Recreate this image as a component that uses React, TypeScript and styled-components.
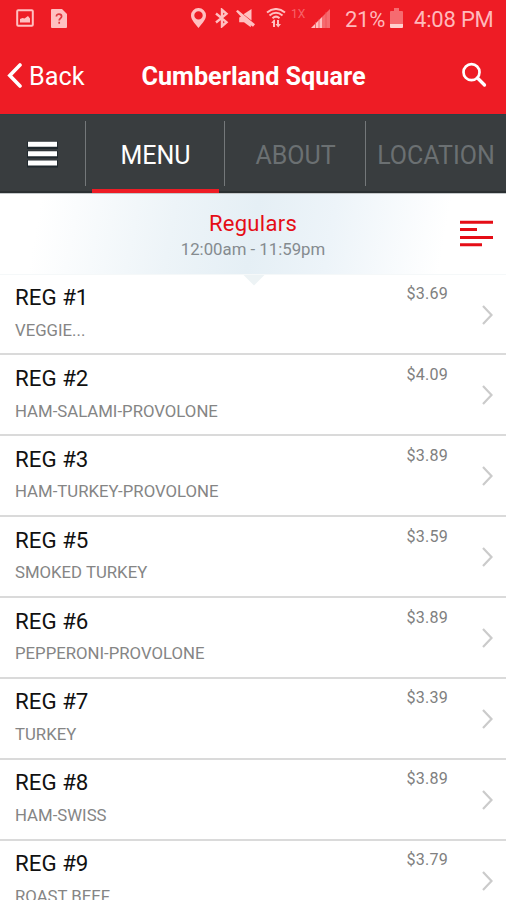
import React from "react";
import styled, { createGlobalStyle, css } from "styled-components";

const GlobalStyle = createGlobalStyle`
  * { box-sizing: border-box; }
  body { margin: 0; background: #fff; overflow: hidden; }
`;

const Screen = styled.main`
  width: 506px;
  height: 900px;
  overflow: hidden;
  display: flex;
  flex-direction: column;
  background: #fff;
  font-family: Roboto, sans-serif;
  white-space: nowrap;
`;

const StatusBar = styled.div`
  flex: none;
  height: 38px;
  display: flex;
  align-items: center;
  padding: 0 12px 0 16px;
  background: #ee1c25;
  color: #ffb9bb;
  font-size: 22px;
  line-height: 40px;
`;

const StatusIcon = styled.svg<{ $gap?: number }>`
  flex: none;
  display: block;
  margin: -2px ${(p) => p.$gap ?? 0}px 0 0;
`;

const Spacer = styled.div`
  flex: 1;
`;

const Network = styled.span`
  width: 20px;
  height: 29px;
  color: #f7636a;
  font-size: 12px;
  line-height: 18px;
`;

const Percent = styled.span`
  width: 45px;
  padding-top: 2px;
  letter-spacing: -0.3px;
`;

const Clock = styled.span`
  width: 80px;
  padding-top: 2px;
  letter-spacing: -0.2px;
`;

const TitleBar = styled.header`
  flex: none;
  height: 76px;
  display: grid;
  grid-template-columns: 120px 1fr 120px;
  align-items: center;
  background: #ee1c25;
  color: #fff;
`;

const BackButton = styled.button`
  display: flex;
  align-items: center;
  gap: 7px;
  height: 76px;
  padding: 0 0 0 7px;
  border: 0;
  background: none;
  color: inherit;
  font: 400 25.3px/30px Roboto, sans-serif;
`;

const BackLabel = styled.span`
  padding-top: 2px;
`;

const Title = styled.h1`
  margin: 1px 0 0 1px;
  text-align: center;
  font-size: 25.2px;
  line-height: 30px;
  font-weight: 700;
`;

const SearchButton = styled.button`
  justify-self: end;
  display: block;
  margin: 0 19px 0 0;
  padding: 0;
  border: 0;
  background: none;
  color: inherit;
`;

const TabBar = styled.nav`
  flex: none;
  height: 79px;
  display: grid;
  grid-template-columns: 86px 139px 141px 140px;
  border-top: 1px solid #2c3f45;
  border-bottom: 2px solid #2b3032;
  background: #393d3f;
`;

const Tab = styled.button<{ $active?: boolean }>`
  display: flex;
  flex-direction: column;
  align-items: center;
  padding: 26px 0 0;
  border: 0;
  background:
    linear-gradient(#74787a, #74787a) right 0 top 6px / 1px 65px no-repeat;
  color: #6b7072;
  font: 400 25px/30px Roboto, sans-serif;
  letter-spacing: 0;
  &:last-child { background: none; }
  ${(p) =>
    p.$active &&
    css`
      color: #fff;
      &::after {
        content: "";
        width: 127px;
        height: 4px;
        margin: 18px 0 -4px;
        flex: none;
        background: #ee1c25;
      }
    `}
`;

const MenuIcon = styled.svg`
  margin-left: -2px;
`;

const Category = styled.section`
  flex: none;
  height: 81.6px;
  display: grid;
  grid-template-columns: 80px 1fr 80px;
  background: linear-gradient(100deg, #fff 8%, #edf4f8 34%, #e5eff5 50%, #edf4f9 65%, #fff 87%);
  border-top: 1px solid #c5c9cb;
  border-bottom: 1px solid #f5f8f9;
`;

const CategoryText = styled.div`
  grid-column: 2;
  display: flex;
  flex-direction: column;
  align-items: center;
  padding-top: 16px;
`;

const CategoryName = styled.h2`
  margin: 0;
  color: #e50d16;
  font-size: 22px;
  line-height: 28px;
  font-weight: 400;
  letter-spacing: 0.3px;
`;

const Hours = styled.span`
  color: #858b8f;
  font-size: 16.8px;
  line-height: 23px;
`;

const SortButton = styled.button`
  justify-self: end;
  align-self: start;
  margin: 26px 13px 0 0;
  padding: 0;
  border: 0;
  background: none;
`;

const List = styled.ul`
  position: relative;
  margin: 0;
  padding: 0;
  list-style: none;
  &::before {
    content: "";
    position: absolute;
    top: 0;
    left: 243px;
    width: 22px;
    height: 11px;
    background: #edf3f5;
    clip-path: polygon(0 0, 100% 0, 50% 100%);
  }
`;

const Item = styled.li`
  height: 80.9px;
  display: grid;
  grid-template-columns: 1fr 58px 58px;
  padding-left: 15px;
  border-bottom: 2px solid #dadada;
`;

const ItemText = styled.div`
  padding-top: 8.4px;
`;

const ItemName = styled.h3`
  margin: 0;
  color: #111;
  font-size: 22.3px;
  line-height: 29px;
  font-weight: 400;
`;

const Description = styled.p`
  margin: 5.7px 0 0;
  color: #858585;
  font-size: 16.75px;
  line-height: 24px;
`;

const Price = styled.span`
  padding-top: 7.4px;
  text-align: right;
  color: #808080;
  font-size: 16.1px;
  line-height: 24px;
  letter-spacing: 0.2px;
`;

const Chevron = styled.svg`
  margin: 30px 0 0 34px;
`;

const items = [
  ["REG #1", "VEGGIE...", "$3.69"],
  ["REG #2", "HAM-SALAMI-PROVOLONE", "$4.09"],
  ["REG #3", "HAM-TURKEY-PROVOLONE", "$3.89"],
  ["REG #5", "SMOKED TURKEY", "$3.59"],
  ["REG #6", "PEPPERONI-PROVOLONE", "$3.89"],
  ["REG #7", "TURKEY", "$3.39"],
  ["REG #8", "HAM-SWISS", "$3.89"],
  ["REG #9", "ROAST BEEF", "$3.79"],
];

const tint = "#ffc0c1";

export default function App() {
  return (
    <>
      <GlobalStyle />
      <Screen>
        <StatusBar>
          <StatusIcon $gap={17} width="18" height="18" viewBox="0 0 18 18">
            <rect x="1.2" y="1.2" width="15.6" height="15.6" rx="1" fill="none" stroke={tint} strokeWidth="2" />
            <path d="M4 13.5V10l2.5-1 2 .5L12 7l2 2.5v4z" fill={tint} />
          </StatusIcon>
          <StatusIcon width="16" height="19" viewBox="0 0 16 19">
            <path d="M1 0h10l5 5v13a1 1 0 0 1-1 1H1a1 1 0 0 1-1-1V1a1 1 0 0 1 1-1z" fill={tint} />
            <path d="M5.4 7.4C5.4 4.2 10.6 4.4 10.6 7.4c0 1.9-2.4 2-2.4 4.1M8.2 12.8v2" fill="none" stroke="#e0383e" strokeWidth="1.7" />
          </StatusIcon>
          <Spacer />
          <StatusIcon $gap={9} width="15" height="20" viewBox="0 0 15 20">
            <path fillRule="evenodd" d="M7.5 0A7.4 7.4 0 0 0 0 7.4C0 12 5 16.3 7.5 20 10 16.3 15 12 15 7.4A7.4 7.4 0 0 0 7.5 0zm0 3.2a4.2 4.2 0 1 1 0 8.4 4.2 4.2 0 0 1 0-8.4z" fill={tint} />
          </StatusIcon>
          <StatusIcon $gap={7} width="14" height="20" viewBox="0 0 14 20">
            <path d="M1 5.5l10.5 8.7-4.5 4V1.8l4.5 4L1 14.5" fill="none" stroke={tint} strokeWidth="2.4" />
          </StatusIcon>
          <StatusIcon $gap={11} width="19" height="20" viewBox="0 0 19 20">
            <path d="M7.5 6.2L15.5 1v11.5z" fill={tint} />
            <path d="M0 3.2L1.8 2 19 16.2l-2 2.6-2.2-1.5v1.9L8 14.2H3.2V9.6L5 8.7z" fill={tint} />
          </StatusIcon>
          <StatusIcon $gap={5} width="20" height="20" viewBox="0 0 20 20">
            <path d="M1 4.5Q10-2.5 19 4.5M3.5 7.5Q10 2 16.5 7.5M6.5 10.3Q10 7 13.5 10.3" fill="none" stroke={tint} strokeWidth="2" />
            <path d="M8 11.5L5.2 15H7v4h2v-7zM11 12v4H9.5l2.7 3.6L15 16h-2v-4z" fill={tint} />
          </StatusIcon>
          <Network>1X</Network>
          <StatusIcon $gap={15} width="19" height="20" viewBox="0 0 19 20">
            <path d="M11 9L19 1v19h-8z" fill="#f66b70" />
            <path d="M0 20L11 9V20z" fill={tint} />
            <path d="M4.5 14v6M8 11v9M15 4v16" stroke="#f14f55" strokeWidth=".8" />
          </StatusIcon>
          <Percent>21%</Percent>
          <StatusIcon $gap={11} width="13" height="20" viewBox="0 0 13 20">
            <path d="M4 0h5v3h3a1 1 0 0 1 1 1v12H0V4a1 1 0 0 1 1-1h3z" fill="#f66b70" />
            <path d="M0 16h13v3a1 1 0 0 1-1 1H1a1 1 0 0 1-1-1z" fill="#ffd0cf" />
          </StatusIcon>
          <Clock>4:08 PM</Clock>
        </StatusBar>

        <TitleBar>
          <BackButton>
            <svg width="15" height="26" viewBox="0 0 15 26">
              <path d="M13 2L2.8 12.5 13 23" fill="none" stroke="#fff" strokeWidth="3.6" strokeLinecap="round" />
            </svg>
            <BackLabel>Back</BackLabel>
          </BackButton>
          <Title>Cumberland Square</Title>
          <SearchButton aria-label="Search">
            <svg width="26" height="26" viewBox="0 0 26 26" fill="none" stroke="#fff">
              <circle cx="10.5" cy="10.2" r="8" strokeWidth="2.7" />
              <path d="M16.5 16l7 7" strokeWidth="3.3" strokeLinecap="round" />
            </svg>
          </SearchButton>
        </TitleBar>

        <TabBar>
          <Tab aria-label="Open navigation">
            <MenuIcon width="31" height="27" viewBox="0 0 31 27">
              <path d="M0 4.2h31M0 13.6h31M0 22.8h31" stroke="#20292e" strokeWidth="7.5" />
              <path d="M1 3.3h29M1 12.7h29M1 21.9h29" stroke="#fff" strokeWidth="5" />
            </MenuIcon>
          </Tab>
          <Tab $active>MENU</Tab>
          <Tab>ABOUT</Tab>
          <Tab>LOCATION</Tab>
        </TabBar>

        <Category>
          <CategoryText>
            <CategoryName>Regulars</CategoryName>
            <Hours>12:00am - 11:59pm</Hours>
          </CategoryText>
          <SortButton aria-label="Sort">
            <svg width="33" height="27" viewBox="0 0 33 27" stroke="#e50d16" strokeWidth="3">
              <path d="M0 2.2h33M0 9.4h17M0 17.5h33M0 24.7h22" />
            </svg>
          </SortButton>
        </Category>

        <List>
          {items.map(([name, description, price]) => (
            <Item key={name}>
              <ItemText>
                <ItemName>{name}</ItemName>
                <Description>{description}</Description>
              </ItemText>
              <Price>{price}</Price>
              <Chevron width="11" height="20" viewBox="0 0 11 20">
                <path d="M1 1l8.5 9L1 19" fill="none" stroke="#cbcbcb" strokeWidth="2.2" />
              </Chevron>
            </Item>
          ))}
        </List>
      </Screen>
    </>
  );
}
